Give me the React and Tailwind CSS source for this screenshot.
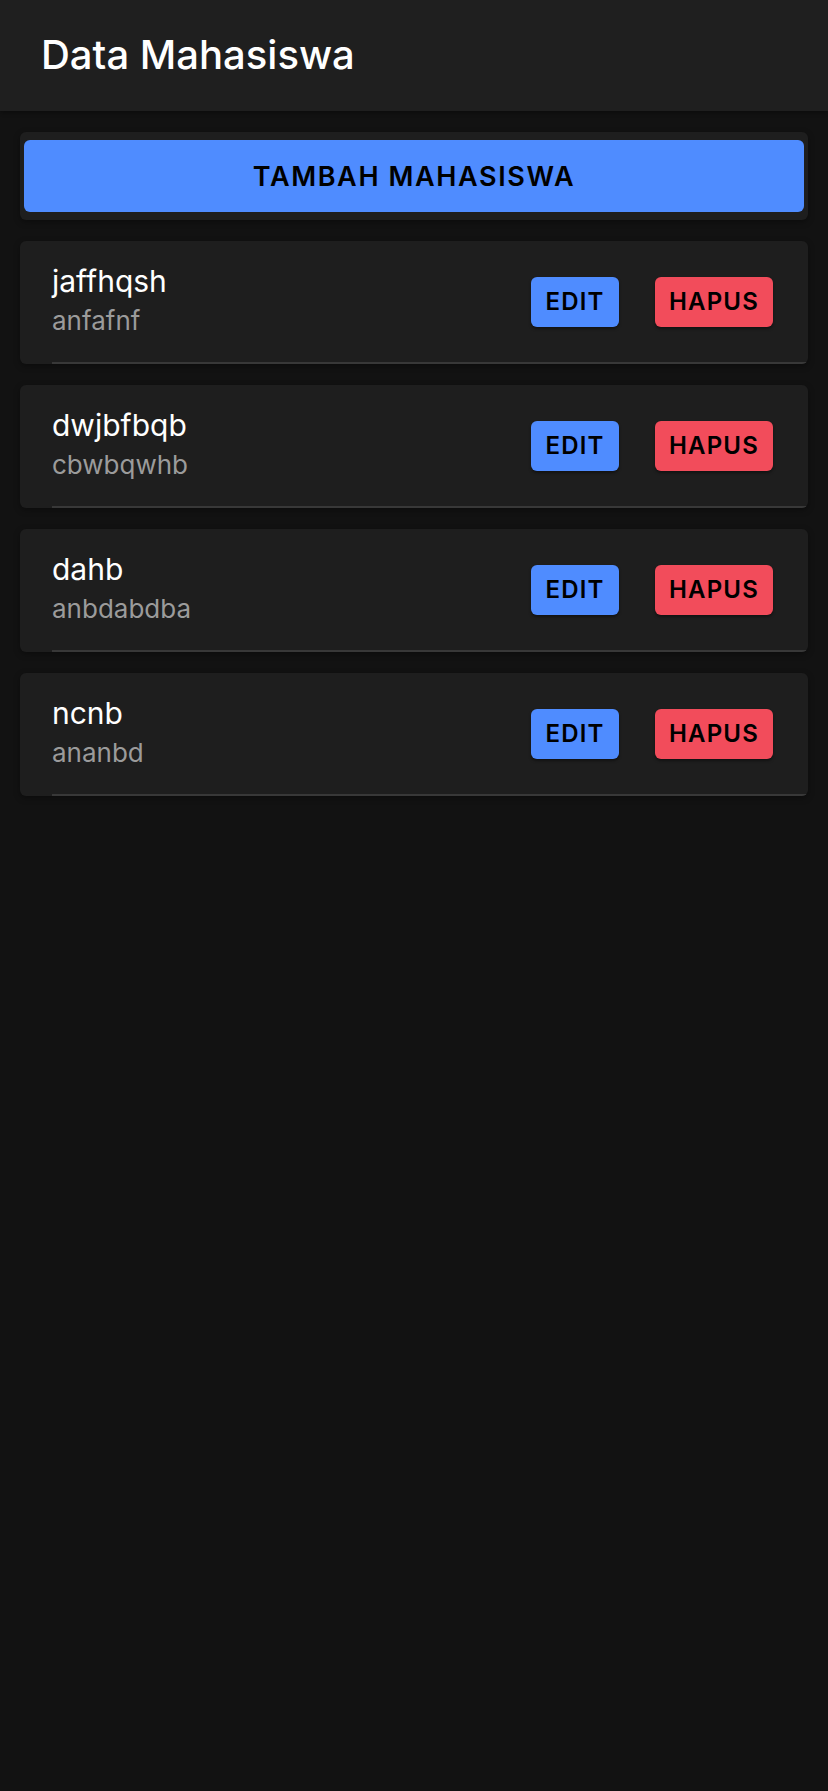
export default function App() {
  const items = [
    { name: "jaffhqsh", sub: "anfafnf" },
    { name: "dwjbfbqb", sub: "cbwbqwhb" },
    { name: "dahb", sub: "anbdabdba" },
    { name: "ncnb", sub: "ananbd" },
  ];
  const font = { fontFamily: "Inter, 'Noto Sans', 'Liberation Sans', sans-serif" };
  return (
    <div className="min-h-[1791px] w-full bg-[#121212]" style={font}>
      <header className="h-[111px] bg-[#1f1f1f] flex items-center px-[41px] pb-[2px] shadow-[0_2px_4px_rgba(0,0,0,0.3)] relative z-10">
        <h1 className="text-[40px] font-medium text-white leading-none tracking-[0px]">Data Mahasiswa</h1>
      </header>
      <main className="px-[20px] pt-[21px]">
        <div className="bg-[#1e1e1e] rounded-[6px] px-[4px] py-[8px] shadow-[0_2px_6px_rgba(0,0,0,0.35)]">
          <button className="w-full h-[72px] rounded-[6px] bg-[#4f8cff] text-black text-[27px] font-semibold uppercase tracking-[0.06em] leading-none">
            Tambah Mahasiswa
          </button>
        </div>
        <div className="flex flex-col gap-[21px] mt-[21px]">
          {items.map((it) => (
            <div
              key={it.name}
              className="h-[123px] bg-[#1e1e1e] rounded-[6px] pl-[32px] flex overflow-hidden shadow-[0_2px_6px_rgba(0,0,0,0.35)]"
            >
              <div className="flex-1 flex items-center border-b-2 border-[#383838] pr-[35px]">
                <div className="flex-1 flex flex-col pb-[2px]">
                  <span className="text-[30px] text-white leading-[36px]">{it.name}</span>
                  <span className="text-[26px] text-[#9b9b9b] leading-[37px] mt-[3px]">{it.sub}</span>
                </div>
                <button className="w-[88px] h-[50px] rounded-[6px] bg-[#4f8cff] text-black text-[24px] font-semibold tracking-[0.05em] leading-none shadow-[0_2px_3px_rgba(0,0,0,0.4)]">
                  EDIT
                </button>
                <button className="w-[118px] h-[50px] ml-[36px] rounded-[6px] bg-[#f24c5b] text-black text-[24px] font-semibold tracking-[0.05em] leading-none shadow-[0_2px_3px_rgba(0,0,0,0.4)]">
                  HAPUS
                </button>
              </div>
            </div>
          ))}
        </div>
      </main>
    </div>
  );
}
